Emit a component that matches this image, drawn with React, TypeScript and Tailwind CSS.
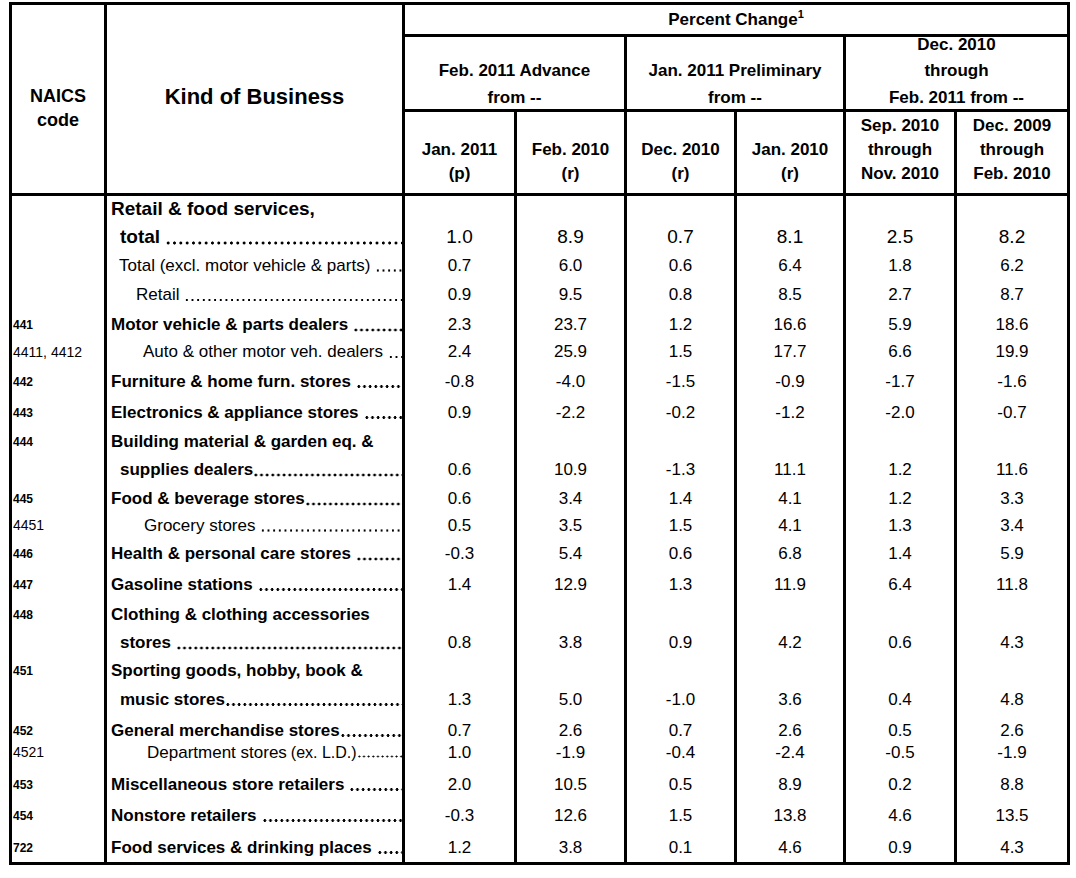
type Row = {
  code?: string;
  codeBold?: boolean;
  label: string;
  note?: string;
  bold?: boolean;
  big?: boolean;
  pad: string;
  h: string;
  nudge?: string;
  dots?: "gap" | "tight" | null;
  values?: string[];
};

const rows: Row[] = [
  { label: "Retail & food services,", bold: true, big: true, pad: "pl-[4px]", h: "h-[27px]", dots: null },
  { label: "total", bold: true, big: true, pad: "pl-[13px]", h: "h-[28px]", dots: "gap", values: ["1.0", "8.9", "0.7", "8.1", "2.5", "8.2"] },
  { label: "Total (excl. motor vehicle & parts)", pad: "pl-[12px]", h: "h-[29px]", dots: "gap", values: ["0.7", "6.0", "0.6", "6.4", "1.8", "6.2"] },
  { label: "Retail", pad: "pl-[29px]", h: "h-[30px]", dots: "gap", values: ["0.9", "9.5", "0.8", "8.5", "2.7", "8.7"] },
  { code: "441", codeBold: true, label: "Motor vehicle & parts dealers", bold: true, pad: "pl-[4px]", h: "h-[28px]", nudge: "pt-[2px]", dots: "gap", values: ["2.3", "23.7", "1.2", "16.6", "5.9", "18.6"] },
  { code: "4411, 4412", label: "Auto & other motor veh. dealers", pad: "pl-[36px]", h: "h-[28px]", dots: "gap", values: ["2.4", "25.9", "1.5", "17.7", "6.6", "19.9"] },
  { code: "442", codeBold: true, label: "Furniture & home furn. stores", bold: true, pad: "pl-[4px]", h: "h-[31px]", dots: "gap", values: ["-0.8", "-4.0", "-1.5", "-0.9", "-1.7", "-1.6"] },
  { code: "443", codeBold: true, label: "Electronics & appliance stores", bold: true, pad: "pl-[4px]", h: "h-[31px]", dots: "gap", values: ["0.9", "-2.2", "-0.2", "-1.2", "-2.0", "-0.7"] },
  { code: "444", codeBold: true, label: "Building material & garden eq. &", bold: true, pad: "pl-[4px]", h: "h-[28px]", dots: null },
  { label: "supplies dealers", bold: true, pad: "pl-[13px]", h: "h-[28px]", dots: "tight", values: ["0.6", "10.9", "-1.3", "11.1", "1.2", "11.6"] },
  { code: "445", codeBold: true, label: "Food & beverage stores", bold: true, pad: "pl-[4px]", h: "h-[28px]", nudge: "pt-[2px]", dots: "tight", values: ["0.6", "3.4", "1.4", "4.1", "1.2", "3.3"] },
  { code: "4451", label: "Grocery stores", pad: "pl-[37px]", h: "h-[27px]", dots: "gap", values: ["0.5", "3.5", "1.5", "4.1", "1.3", "3.4"] },
  { code: "446", codeBold: true, label: "Health & personal care stores", bold: true, pad: "pl-[4px]", h: "h-[30px]", dots: "gap", values: ["-0.3", "5.4", "0.6", "6.8", "1.4", "5.9"] },
  { code: "447", codeBold: true, label: "Gasoline stations", bold: true, pad: "pl-[4px]", h: "h-[31px]", dots: "gap", values: ["1.4", "12.9", "1.3", "11.9", "6.4", "11.8"] },
  { code: "448", codeBold: true, label: "Clothing & clothing accessories", bold: true, pad: "pl-[4px]", h: "h-[29px]", dots: null },
  { label: "stores", bold: true, pad: "pl-[13px]", h: "h-[28px]", dots: "gap", values: ["0.8", "3.8", "0.9", "4.2", "0.6", "4.3"] },
  { code: "451", codeBold: true, label: "Sporting goods, hobby, book &", bold: true, pad: "pl-[4px]", h: "h-[28px]", dots: null },
  { label: "music stores", bold: true, pad: "pl-[13px]", h: "h-[29px]", dots: "tight", values: ["1.3", "5.0", "-1.0", "3.6", "0.4", "4.8"] },
  { code: "452", codeBold: true, label: "General merchandise stores", bold: true, pad: "pl-[4px]", h: "h-[28px]", nudge: "pt-[5px]", dots: "tight", values: ["0.7", "2.6", "0.7", "2.6", "0.5", "2.6"] },
  { code: "4521", label: "Department stores", note: "(ex. L.D.)", pad: "pl-[40px]", h: "h-[27px]", nudge: "pb-[6px]", dots: "tight", values: ["1.0", "-1.9", "-0.4", "-2.4", "-0.5", "-1.9"] },
  { code: "453", codeBold: true, label: "Miscellaneous store retailers", bold: true, pad: "pl-[4px]", h: "h-[31px]", dots: "gap", values: ["2.0", "10.5", "0.5", "8.9", "0.2", "8.8"] },
  { code: "454", codeBold: true, label: "Nonstore retailers", bold: true, pad: "pl-[4px]", h: "h-[31px]", dots: "gap", values: ["-0.3", "12.6", "1.5", "13.8", "4.6", "13.5"] },
  { code: "722", codeBold: true, label: "Food services & drinking places", bold: true, pad: "pl-[4px]", h: "h-[31px]", nudge: "pt-[2px]", dots: "gap", values: ["1.2", "3.8", "0.1", "4.6", "0.9", "4.3"] },
];

// dot leaders, drawn as a repeating dot pattern up to the column rule
const leaderBig =
  "bg-[radial-gradient(circle_at_50%_calc(50%_+_6px),#000_1.3px,transparent_1.8px)] bg-[length:6.33px_100%]";
const leaderBold =
  "bg-[radial-gradient(circle_at_50%_calc(50%_+_5px),#000_1.2px,transparent_1.7px)] bg-[length:5.67px_100%]";
const leaderRegular =
  "bg-[radial-gradient(circle_at_50%_calc(50%_+_5px),#000_0.9px,transparent_1.4px)] bg-[length:5.67px_100%]";
const leaderSmall =
  "bg-[radial-gradient(circle_at_50%_calc(50%_+_4px),#000_0.8px,transparent_1.2px)] bg-[length:4.67px_100%]";

const line = "border-r-[3px] border-black p-0";

function BodyRow({ row, last }: { row: Row; last: boolean }) {
  const cell = last ? `${line} border-b-[3px]` : line;
  const size = row.big ? "text-[19px]" : "text-[17px]";
  const nudge = row.nudge ?? "";
  const leader = row.big ? leaderBig : row.note ? leaderSmall : row.bold ? leaderBold : leaderRegular;
  return (
    <tr>
      <td className={cell}>
        <div
          className={`${row.h} ${nudge} flex items-center pl-[1px] ${row.codeBold ? "text-[12px] font-bold" : "text-[14px] font-normal"}`}
        >
          {row.code}
        </div>
      </td>
      <td className={cell}>
        <div
          className={`${row.h} ${nudge} ${row.pad} flex items-center overflow-hidden whitespace-nowrap ${size} ${row.bold ? "font-bold" : "font-normal"}`}
        >
          <span className="shrink-0">{row.label}</span>
          {row.note && <span className="ml-[4px] shrink-0 text-[16px]">{row.note}</span>}
          {row.dots && (
            <span className={`min-w-0 flex-1 self-stretch ${leader} ${row.dots === "gap" ? "ml-[5px]" : ""}`} />
          )}
        </div>
      </td>
      {Array.from({ length: 6 }).map((_, i) => (
        <td key={i} className={cell}>
          <div className={`${row.h} ${nudge} flex items-center justify-center ${size}`}>
            {row.values?.[i]}
          </div>
        </td>
      ))}
    </tr>
  );
}

function Stack({ lines, box }: { lines: string[]; box: string }) {
  return (
    <div className={`${box} flex flex-col items-center justify-end`}>
      {lines.map((l) => (
        <span key={l} className="whitespace-nowrap">
          {l}
        </span>
      ))}
    </div>
  );
}

export default function App() {
  const head = "border-r-[3px] border-b-[3px] border-black p-0 font-bold";
  return (
    <div className="w-[1076px] h-[878px] bg-white text-black font-['Liberation_Sans',Arial,sans-serif] overflow-hidden">
      <table className="ml-[9px] mt-[2px] w-[1061px] table-fixed border-separate border-spacing-0 border-l-[3px] border-t-[3px] border-black">
        <colgroup>
          <col className="w-[95px]" />
          <col className="w-[298px]" />
          <col className="w-[112px]" />
          <col className="w-[110px]" />
          <col className="w-[110px]" />
          <col className="w-[109px]" />
          <col className="w-[111px]" />
          <col className="w-[113px]" />
        </colgroup>
        <thead>
          <tr>
            <th rowSpan={3} className={`${head} align-top text-[18px] leading-[24px]`}>
              <div className="pt-[79px]">
                NAICS
                <br />
                code
              </div>
            </th>
            <th rowSpan={3} className={`${head} align-top text-[22px] leading-[24px]`}>
              <div className="pt-[80px]">Kind of Business</div>
            </th>
            <th colSpan={6} className={head}>
              <div className="h-[29px] flex items-center justify-center text-[17px]">
                Percent Change<sup className="text-[11px]">1</sup>
              </div>
            </th>
          </tr>
          <tr>
            <th colSpan={2} className={`${head} text-[17px] leading-[26.5px]`}>
              <Stack lines={["Feb. 2011 Advance", "from --"]} box="h-[74px] -mb-[2px]" />
            </th>
            <th colSpan={2} className={`${head} text-[17px] leading-[26.5px]`}>
              <Stack lines={["Jan. 2011 Preliminary", "from --"]} box="h-[74px] -mb-[2px]" />
            </th>
            <th colSpan={2} className={`${head} text-[17px] leading-[26.5px]`}>
              <Stack lines={["Dec. 2010", "through", "Feb. 2011 from --"]} box="h-[74px] -mb-[2px]" />
            </th>
          </tr>
          <tr>
            {[
              ["Jan. 2011", "(p)"],
              ["Feb. 2010", "(r)"],
              ["Dec. 2010", "(r)"],
              ["Jan. 2010", "(r)"],
              ["Sep. 2010", "through", "Nov. 2010"],
              ["Dec. 2009", "through", "Feb. 2010"],
            ].map((l, i) => (
              <th key={i} className={`${head} text-[17px] leading-[24px]`}>
                <Stack lines={l} box="h-[81px] pb-[7px]" />
              </th>
            ))}
          </tr>
        </thead>
        <tbody>
          {rows.map((r, i) => (
            <BodyRow key={i} row={r} last={i === rows.length - 1} />
          ))}
        </tbody>
      </table>
    </div>
  );
}
